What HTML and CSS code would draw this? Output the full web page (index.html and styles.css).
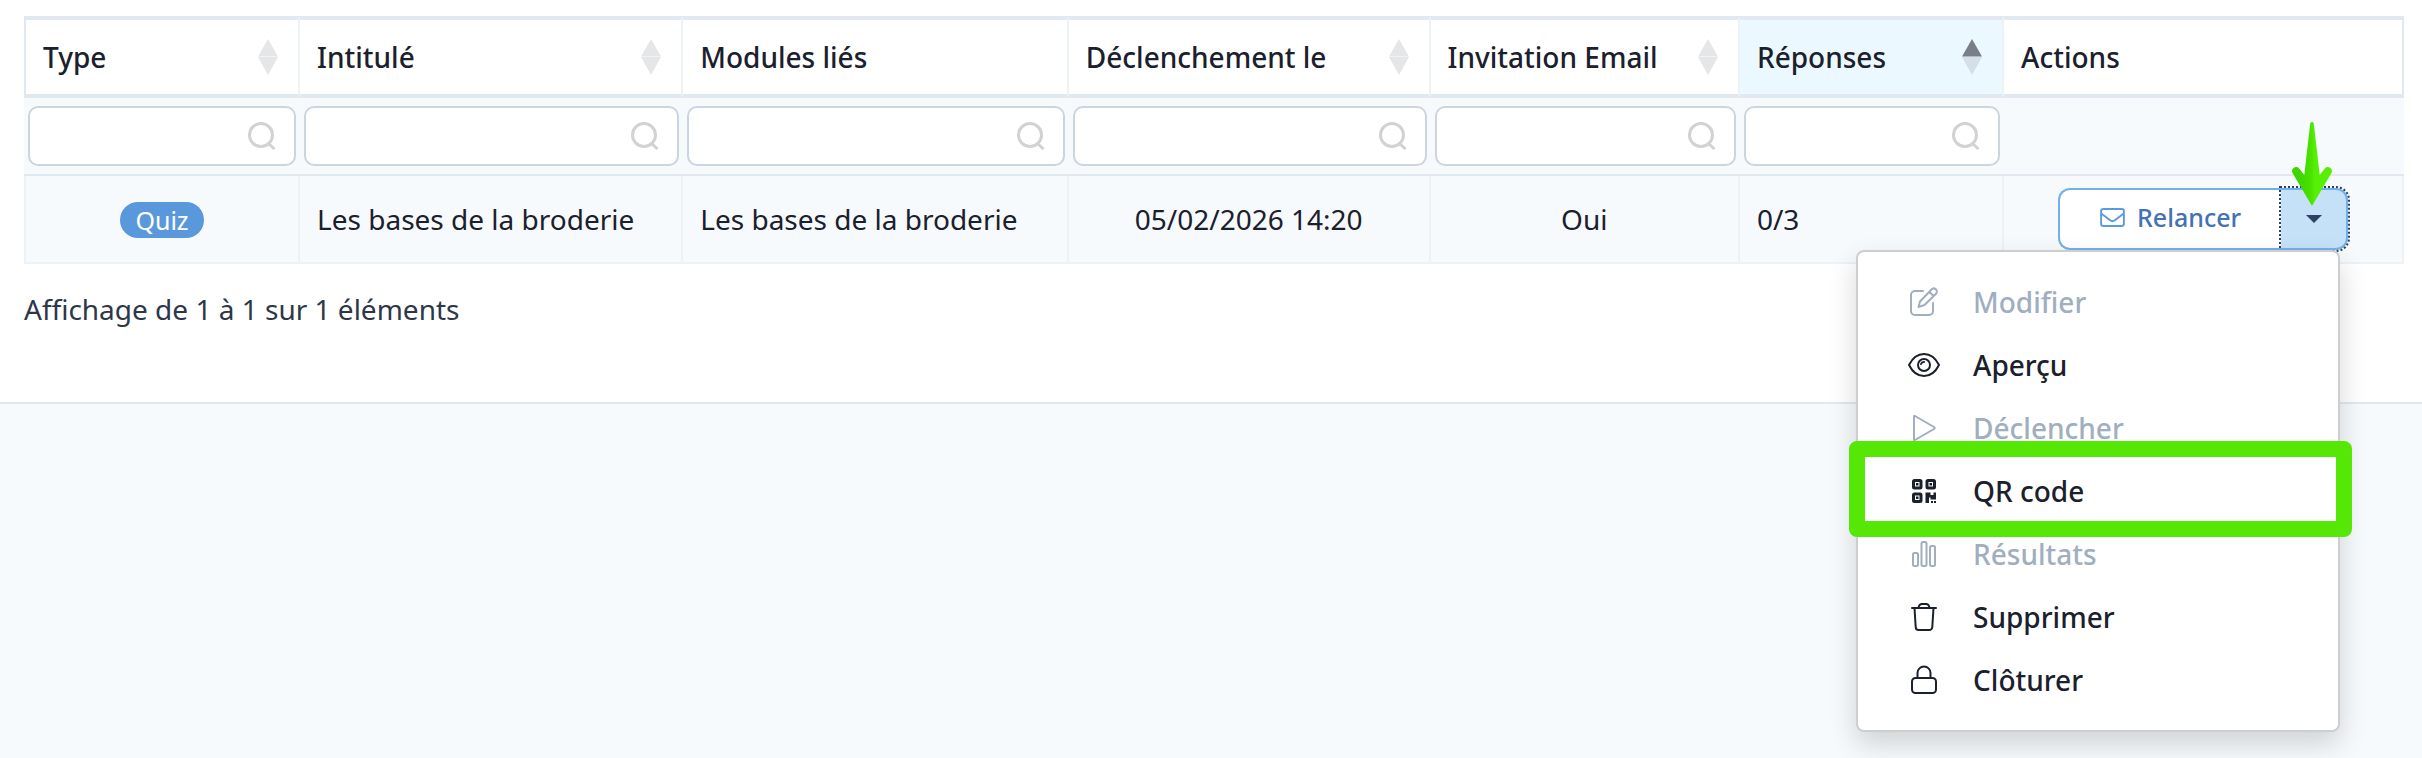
FILE: index.html
```html
<!DOCTYPE html>
<html lang="fr">
<head>
<meta charset="utf-8">
<title>Questionnaires</title>
<link rel="stylesheet" href="styles.css">
</head>
<body>
<svg class="defs" aria-hidden="true">
  <symbol id="i-sort" viewBox="0 0 20 36"><path class="up" d="M10 0L20 17.600H0z"/><path class="down" d="M0 18H20L10 36z"/></symbol>
  <symbol id="i-search" viewBox="0 0 28 28"><path d="M13 1.500a11.500 11.500 0 1 0 0 23a11.500 11.500 0 1 0 0-23zM20.500 21.500L26.500 27" fill="none" stroke="currentColor" stroke-width="3"/></symbol>
</svg>
<main class="panel">
  <table class="grid">
    <colgroup><col class="c-type"><col class="c-title"><col class="c-modules"><col class="c-date"><col class="c-mail"><col class="c-answers"><col></colgroup>
    <thead>
      <tr class="heads">
        <th scope="col"><div class="head">Type<svg class="sort"><use href="#i-sort"/></svg></div></th>
        <th scope="col"><div class="head">Intitulé<svg class="sort"><use href="#i-sort"/></svg></div></th>
        <th scope="col"><div class="head">Modules liés</div></th>
        <th scope="col"><div class="head">Déclenchement le<svg class="sort"><use href="#i-sort"/></svg></div></th>
        <th scope="col"><div class="head">Invitation Email<svg class="sort"><use href="#i-sort"/></svg></div></th>
        <th scope="col" class="sorted" aria-sort="ascending"><div class="head">Réponses<svg class="sort"><use href="#i-sort"/></svg></div></th>
        <th scope="col"><div class="head">Actions</div></th>
      </tr>
      <tr class="filters">
        <td><label class="filter"><input type="text" aria-label="Type"><svg class="search"><use href="#i-search"/></svg></label></td>
        <td><label class="filter"><input type="text" aria-label="Intitulé"><svg class="search"><use href="#i-search"/></svg></label></td>
        <td><label class="filter"><input type="text" aria-label="Modules liés"><svg class="search"><use href="#i-search"/></svg></label></td>
        <td><label class="filter"><input type="text" aria-label="Déclenchement le"><svg class="search"><use href="#i-search"/></svg></label></td>
        <td><label class="filter"><input type="text" aria-label="Invitation Email"><svg class="search"><use href="#i-search"/></svg></label></td>
        <td><label class="filter"><input type="text" aria-label="Réponses"><svg class="search"><use href="#i-search"/></svg></label></td>
        <td></td>
      </tr>
    </thead>
    <tbody>
      <tr>
        <td class="center"><span class="badge">Quiz</span></td>
        <td>Les bases de la broderie</td>
        <td>Les bases de la broderie</td>
        <td class="center">05/02/2026 14:20</td>
        <td class="center">Oui</td>
        <td>0/3</td>
        <td class="actions">
          <div class="split">
            <button type="button" class="remind">
              <svg class="mail" viewBox="0 0 26 20" fill="none" stroke="currentColor" stroke-width="2"><rect x="1" y="1" width="24" height="18" rx="2.500"/><path d="M1.500 6l9 7q2.500 1.800 5 0l9-7"/></svg>
              Relancer
            </button>
            <button type="button" class="toggle" aria-label="Plus d’actions" aria-expanded="true">
              <svg class="caret" viewBox="0 0 16 8"><path d="M0 0H16L8 8z" fill="currentColor"/></svg>
            </button>
            <svg class="pointer" viewBox="0 0 40 84" aria-hidden="true">
              <defs><linearGradient id="g-arrow"><stop offset="0.200" stop-color="#3fd600"/><stop offset="0.450" stop-color="#48e000"/><stop offset="0.580" stop-color="#57f005"/></linearGradient></defs>
              <path fill="url(#g-arrow)" d="M20 0Q21.800 0 22 3L27.700 53L32.800 46.600C36 42.600 42.200 47 39.200 51.600L20 84L0.800 51.600C-2.200 47 4 42.600 7.200 46.600L12.300 53L18 3Q18.200 0 20 0z"/>
            </svg>
            <div class="menu" role="menu">
              <button type="button" role="menuitem" disabled><svg class="icon" viewBox="0 0 32 32"><path d="M15 5H7a4 4 0 0 0-4 4v16a4 4 0 0 0 4 4h14a4 4 0 0 0 4-4V17M12 15.500L23.500 3.500a2.800 2.800 0 0 1 4.500 4.200L16.500 19l-6 2zM21.500 6l4 4"/></svg>Modifier</button>
              <button type="button" role="menuitem"><svg class="icon" viewBox="0 0 32 32"><path d="M1 16C4.500 9 10 5 16 5s11.500 4 15 11c-3.500 7-9 11-15 11S4.500 23 1 16z"/><circle cx="16" cy="16" r="6"/><path d="M13 15a3 3 0 0 1 3-2"/></svg>Aperçu</button>
              <button type="button" role="menuitem" disabled><svg class="icon" viewBox="0 0 32 32"><path d="M6 4.500v23q0 1 1 .5L26 17q1.500-1 0-2L7 4q-1-.500-1 .5z"/></svg>Déclencher</button>
              <button type="button" role="menuitem" class="marked"><svg class="icon" viewBox="0 0 32 32"><g stroke-width="3"><rect x="5.500" y="5.500" width="7.500" height="7.500" rx="1"/><rect x="19" y="5.500" width="7.500" height="7.500" rx="1"/><rect x="5.500" y="19" width="7.500" height="7.500" rx="1"/></g><path stroke="none" fill="currentColor" d="M8 8h2.500v2.500H8zM21.500 8H24v2.500h-2.500zM8 21.500h2.500V24H8zM17.500 17.500h5v2.500h3v-2.500h2.500v7h-5.500v-2h-1.500v5.500h-3.500zM23 26h2v2h-2zM26 26h2v2h-2z"/></svg>QR code</button>
              <button type="button" role="menuitem" disabled><svg class="icon" viewBox="0 0 32 32"><rect x="5" y="15" width="5" height="13" rx="1.500"/><rect x="13.500" y="4" width="5" height="24" rx="1.500"/><rect x="22" y="8" width="5" height="20" rx="1.500"/></svg>Résultats</button>
              <button type="button" role="menuitem"><svg class="icon" viewBox="0 0 32 32"><path d="M4 7h24M10.500 7Q11 3 14 3h4q3 0 3.500 4M6.500 7l1.200 19a3 3 0 0 0 3 3h10.600a3 3 0 0 0 3-3L25.500 7"/></svg>Supprimer</button>
              <button type="button" role="menuitem"><svg class="icon" viewBox="0 0 32 32"><rect x="4" y="14" width="24" height="15" rx="3.500"/><path d="M9.500 14V9a6.500 6.500 0 0 1 13 0v5"/></svg>Clôturer</button>
            </div>
          </div>
        </td>
      </tr>
    </tbody>
  </table>
  <p class="summary">Affichage de 1 à 1 sur 1 éléments</p>
</main>
</body>
</html>
```
FILE: styles.css
```css
* { box-sizing: border-box; }
body {
  margin: 0;
  min-height: 100vh;
  background: #f7fafc;
  color: #1a202c;
  font: 28px/42px "Noto Sans", "Open Sans", sans-serif;
}
button, input { font: inherit; color: inherit; }
.defs { display: none; }
.panel {
  background: #fff;
  border-bottom: 2px solid #e2e8f0;
  padding: 16px 18px 72px 24px;
}
.grid {
  width: 100%;
  table-layout: fixed;
  border-collapse: separate;
  border-spacing: 0;
}
.c-type { width: 11.6%; }
.c-title { width: 16.1%; }
.c-modules { width: 16.2%; }
.c-date { width: 15.2%; }
.c-mail { width: 13%; }
.c-answers { width: 11.1%; }

.heads th {
  height: 82px;
  padding: 0 20px 0 17px;
  border-top: 4px solid #e2e8f0;
  border-bottom: 4px solid #e2e8f0;
  border-right: 2px solid #edf2f7;
  font-weight: 500;
  text-align: left;
}
.heads th:first-child { border-left: 2px solid #e2e8f0; }
.heads th:last-child { border-right-color: #e2e8f0; }
.heads .sorted { background: #ebf8ff; }
.head { display: flex; align-items: center; justify-content: space-between; }
.sort { --up: #e5e6e8; --down: #e5e6e8; width: 20px; height: 36px; }
.sorted .sort { --up: #787f89; --down: #d4dfe7; }
.up { fill: var(--up); }
.down { fill: var(--down); }

.filters td {
  height: 78px;
  padding: 0 4px;
  background: #f7fafc;
  border-bottom: 2px solid #e2e8f0;
}
.filter {
  display: flex;
  align-items: center;
  height: 60px;
  padding-right: 18px;
  background: #fff;
  border: 2px solid #cbd5e0;
  border-radius: 10px;
}
.filter input {
  flex: 1;
  min-width: 0;
  padding: 0 14px;
  border: 0;
  background: none;
  outline: 0;
}
.search { width: 28px; height: 28px; color: #d2d2d2; }

tbody td {
  height: 88px;
  padding: 0 17px;
  background: #f7fafc;
  border-right: 2px solid #edf2f7;
  border-bottom: 2px solid #edf2f7;
}
tbody td:first-child { border-left: 2px solid #edf2f7; }
.center { text-align: center; }
.badge {
  display: inline-block;
  padding: 0 15px;
  border-radius: 18px;
  background: #5a98dc;
  color: #fff;
  font-size: 25px;
  line-height: 36px;
}

.split { position: relative; display: flex; width: 290px; margin: 0 auto; }
.remind, .toggle {
  display: flex;
  align-items: center;
  justify-content: center;
  height: 62px;
  padding: 0;
  border: 2px solid #73b0ea;
}
.remind {
  flex: 1;
  gap: 12px;
  padding-bottom: 4px;
  border-right: 0;
  border-radius: 12px 0 0 12px;
  background: #fff;
  color: #4371b3;
  font-size: 25px;
  font-weight: 500;
  line-height: 36px;
}
.toggle {
  width: 67px;
  border-left: 0;
  border-radius: 0 12px 12px 0;
  background: #c5e1f7;
  color: #2d4163;
  outline: 2px dotted #2d4163;
}
.mail { width: 25px; height: 19px; color: #5a9be0; }
.caret { width: 16px; height: 8px; }
.pointer {
  position: absolute;
  z-index: 2;
  right: 16px;
  bottom: 44px;
  width: 40px;
  height: 84px;
}

.menu {
  position: absolute;
  top: 62px;
  right: 8px;
  width: 484px;
  padding: 18px 0 19px;
  background: #fff;
  border: 2px solid #ccced0;
  border-radius: 8px;
  box-shadow: 0 12px 28px rgba(0, 0, 0, 0.16);
}
.menu button {
  position: relative;
  display: flex;
  align-items: center;
  gap: 33px;
  width: 100%;
  height: 63px;
  padding: 0 50px;
  border: 0;
  background: none;
  font-weight: 500;
}
.menu button:disabled { color: #a0aec0; }
.icon {
  width: 32px;
  height: 32px;
  fill: none;
  stroke: currentColor;
  stroke-width: 2;
  stroke-linejoin: round;
  stroke-linecap: round;
}
.menu .marked::after {
  content: "";
  position: absolute;
  z-index: 1;
  inset: -18px -14px -15px -9px;
  border: 16px solid #55e806;
  border-radius: 8px;
}

.summary { margin: 24px 0 0; color: #2d3748; }
```
